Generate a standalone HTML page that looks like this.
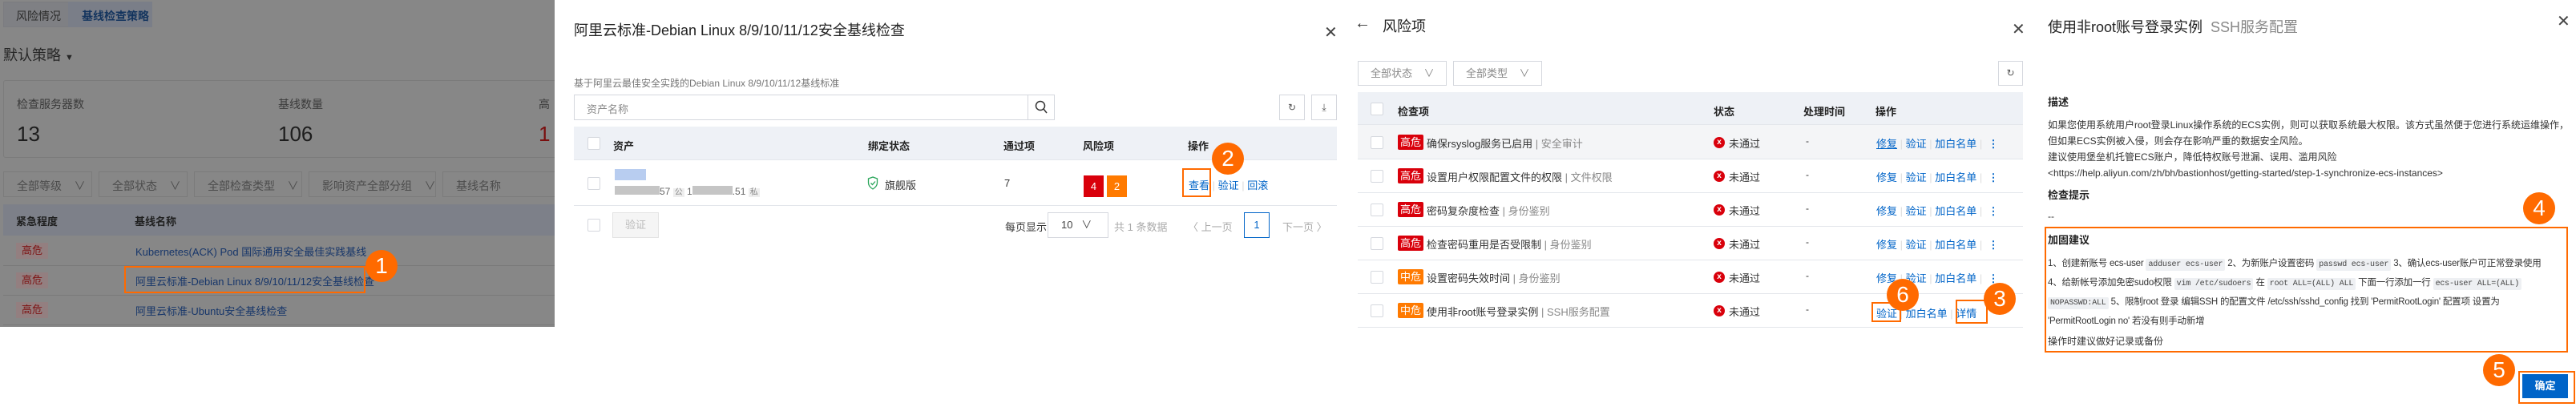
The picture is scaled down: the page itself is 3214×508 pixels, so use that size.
<!DOCTYPE html>
<html><head><meta charset="utf-8"><style>
*{margin:0;padding:0;box-sizing:border-box}
body{width:3214px;height:508px;background:#fff;position:relative;overflow:hidden;font-family:"Liberation Sans","Noto Sans CJK SC",sans-serif;font-size:12px;color:#333}
.a{position:absolute;white-space:nowrap}
.g{background:#878787}
.cb{position:absolute;width:16px;height:16px;border:1px solid #d5d8de;background:#fff;border-radius:2px}
.circ{position:absolute;width:40px;height:40px;border-radius:50%;background:#ff6a00;color:#fff;font-size:28px;line-height:40px;text-align:center;font-family:"Liberation Sans",sans-serif}
.ob{position:absolute;border:2px solid #ff6a00}
.lk{color:#0064c8}
.tagr{position:absolute;background:#d9000b;color:#fff;height:19px;line-height:19px;padding:0 3px;font-size:13px;border-radius:2px}
.tago{position:absolute;background:#ff7a00;color:#fff;height:19px;line-height:19px;padding:0 3px;font-size:13px;border-radius:2px}
.code{background:#eef0f3;font-family:"Liberation Mono",monospace;font-size:10px;padding:2px 3px;color:#444;border-radius:2px}
.x{position:absolute;width:14px;height:14px;border-radius:50%;background:#d9000b;color:#fff;font-size:10px;line-height:14px;text-align:center;font-weight:bold}
.sel{position:absolute;border:1px solid #d5d8de;height:31px;color:#888;line-height:29px;padding-left:15px;font-size:13px}
#left{position:absolute;left:0;top:0;width:692px;height:408px;overflow:hidden;background:#878787}
</style></head><body>

<!-- LEFT dimmed page -->
<div id="left">
<div class="a" style="left:4px;top:2px;width:186px;height:32px;background:#7f8084;border:1px solid #7b7c80"></div>
<div class="a" style="left:85px;top:2px;width:105px;height:32px;background:#7a7e88"></div>
<div class="a" style="left:20px;top:10px;font-size:14px;color:#2b2b2b">风险情况</div>
<div class="a" style="left:102px;top:10px;font-size:14px;color:#13345e;font-weight:bold">基线检查策略</div>
<div class="a" style="left:4px;top:55px;font-size:18px;color:#262626">默认策略 <span style="font-size:11px">▼</span></div>
<div class="a" style="left:4px;top:100px;width:700px;height:97px;border:1px solid #7b7b7b;border-radius:3px"></div>
<div class="a" style="left:21px;top:120px;font-size:14px;color:#3a3a3a">检查服务器数</div>
<div class="a" style="left:21px;top:152px;font-size:26px;color:#1d1d1d">13</div>
<div class="a" style="left:347px;top:120px;font-size:14px;color:#3a3a3a">基线数量</div>
<div class="a" style="left:347px;top:152px;font-size:26px;color:#1d1d1d">106</div>
<div class="a" style="left:672px;top:120px;font-size:14px;color:#3a3a3a">高</div>
<div class="a" style="left:672px;top:152px;font-size:26px;color:#7a0f0f">1</div>
<div class="a" style="left:4px;top:214px;width:111px;height:32px;border:1px solid #7b7b7b"></div>
<div class="a" style="left:123px;top:214px;width:111px;height:32px;border:1px solid #7b7b7b"></div>
<div class="a" style="left:242px;top:214px;width:135px;height:32px;border:1px solid #7b7b7b"></div>
<div class="a" style="left:385px;top:214px;width:159px;height:32px;border:1px solid #7b7b7b"></div>
<div class="a" style="left:552px;top:214px;width:150px;height:32px;border:1px solid #7b7b7b"></div>
<div class="a" style="left:21px;top:222px;font-size:14px;color:#4c4c4c">全部等级 &nbsp;&nbsp; ∨</div>
<div class="a" style="left:140px;top:222px;font-size:14px;color:#4c4c4c">全部状态 &nbsp;&nbsp; ∨</div>
<div class="a" style="left:259px;top:222px;font-size:14px;color:#4c4c4c">全部检查类型 &nbsp;&nbsp; ∨</div>
<div class="a" style="left:402px;top:222px;font-size:14px;color:#4c4c4c">影响资产全部分组 &nbsp;&nbsp; ∨</div>
<div class="a" style="left:569px;top:222px;font-size:14px;color:#4c4c4c">基线名称</div>
<div class="a" style="left:4px;top:255px;width:690px;height:39px;background:#7d8089"></div>
<div class="a" style="left:20px;top:266px;font-size:13px;font-weight:bold;color:#1f1f1f">紧急程度</div>
<div class="a" style="left:168px;top:266px;font-size:13px;font-weight:bold;color:#1f1f1f">基线名称</div>
<div class="a" style="left:4px;top:331px;width:690px;height:1px;background:#7a7a7a"></div>
<div class="a" style="left:4px;top:368px;width:690px;height:1px;background:#7a7a7a"></div>
<div class="a" style="left:4px;top:405px;width:690px;height:1px;background:#7a7a7a"></div>
<div class="a" style="left:20px;top:303px;width:40px;height:20px;background:#937f80;color:#7d1212;font-size:13px;line-height:20px;text-align:center">高危</div>
<div class="a" style="left:20px;top:340px;width:40px;height:20px;background:#937f80;color:#7d1212;font-size:13px;line-height:20px;text-align:center">高危</div>
<div class="a" style="left:20px;top:377px;width:40px;height:20px;background:#937f80;color:#7d1212;font-size:13px;line-height:20px;text-align:center">高危</div>
<div class="a" style="left:169px;top:304px;font-size:13px;color:#17366a">Kubernetes(ACK) Pod 国际通用安全最佳实践基线</div>
<div class="a" style="left:169px;top:341px;font-size:13px;color:#17366a">阿里云标准-Debian Linux 8/9/10/11/12安全基线检查</div>
<div class="a" style="left:169px;top:378px;font-size:13px;color:#17366a">阿里云标准-Ubuntu安全基线检查</div>
<div class="ob" style="left:155px;top:332px;width:301px;height:34px"></div>
<div class="circ" style="left:456px;top:312px">1</div>
</div>

<!-- MODAL 2 -->
<div class="a" style="left:716px;top:24px;font-size:18px;color:#222">阿里云标准-Debian Linux 8/9/10/11/12安全基线检查</div>
<div class="a" style="left:716px;top:95px;font-size:12px;color:#777">基于阿里云最佳安全实践的Debian Linux 8/9/10/11/12基线标准</div>
<div class="a" style="left:716px;top:118px;width:600px;height:32px;border:1px solid #d5d8de"></div>
<div class="a" style="left:1282px;top:118px;width:1px;height:32px;background:#d5d8de"></div>
<div class="a" style="left:732px;top:126px;font-size:13px;color:#888">资产名称</div>
<svg class="a" style="left:1291px;top:125px" width="16" height="18" viewBox="0 0 16 18"><circle cx="7" cy="7" r="5.5" fill="none" stroke="#333" stroke-width="1.5"/><path d="M11 11l4 5" stroke="#333" stroke-width="1.5"/></svg>
<div class="a" style="left:1596px;top:118px;width:32px;height:32px;border:1px solid #d5d8de;text-align:center;line-height:30px;color:#555;font-size:12px">↻</div>
<div class="a" style="left:1636px;top:118px;width:32px;height:32px;border:1px solid #d5d8de;text-align:center;line-height:30px;color:#555;font-size:12px">⤓</div>
<div class="a" style="left:716px;top:158px;width:952px;height:42px;background:#eef1f6;border-bottom:1px solid #e3e6eb"></div>
<div class="cb" style="left:733px;top:171px"></div>
<div class="a" style="left:765px;top:172px;font-weight:bold;font-size:13px;color:#222">资产</div>
<div class="a" style="left:1083px;top:172px;font-weight:bold;font-size:13px;color:#222">绑定状态</div>
<div class="a" style="left:1252px;top:172px;font-weight:bold;font-size:13px;color:#222">通过项</div>
<div class="a" style="left:1351px;top:172px;font-weight:bold;font-size:13px;color:#222">风险项</div>
<div class="a" style="left:1482px;top:172px;font-weight:bold;font-size:13px;color:#222">操作</div>
<div class="cb" style="left:733px;top:221px"></div>
<div class="a" style="left:767px;top:211px;width:39px;height:14px;background:#b8cdf0"></div>
<div class="a" style="left:767px;top:231px;font-size:12px;color:#666"><span style="display:inline-block;width:56px;height:11px;background:#c5c5c5"></span>57 <span style="background:#eee;color:#888;font-size:10px;padding:0 2px">公</span> 1<span style="display:inline-block;width:50px;height:11px;background:#c5c5c5"></span>.51 <span style="background:#eee;color:#888;font-size:10px;padding:0 2px">私</span></div>
<svg class="a" style="left:1082px;top:220px" width="14" height="17" viewBox="0 0 14 17"><path d="M7 1L1.5 3v5c0 4 3 6.5 5.5 8 2.5-1.5 5.5-4 5.5-8V3z" fill="none" stroke="#2aa55a" stroke-width="1.3"/><path d="M4.5 8.5l2 2 3.5-4" fill="none" stroke="#2aa55a" stroke-width="1.3"/></svg>
<div class="a" style="left:1104px;top:221px;font-size:13px;color:#333">旗舰版</div>
<div class="a" style="left:1253px;top:221px;font-size:13px;color:#333">7</div>
<div class="a" style="left:1352px;top:219px;width:25px;height:27px;background:#d9000b;color:#fff;text-align:center;line-height:27px;font-size:13px">4</div>
<div class="a" style="left:1381px;top:219px;width:25px;height:27px;background:#ff7a00;color:#fff;text-align:center;line-height:27px;font-size:13px">2</div>
<div class="a lk" style="left:1483px;top:221px;font-size:13px">查看 <span style="color:#ddd">|</span> 验证 <span style="color:#ddd">|</span> 回滚</div>
<div class="ob" style="left:1475px;top:210px;width:36px;height:36px"></div>
<div class="circ" style="left:1512px;top:178px">2</div>
<div class="a" style="left:716px;top:256px;width:952px;height:1px;background:#e3e6eb"></div>
<div class="cb" style="left:733px;top:273px"></div>
<div class="a" style="left:764px;top:265px;width:58px;height:32px;border:1px solid #e3e3e3;background:#f5f5f5;color:#bbb;text-align:center;line-height:30px;font-size:13px">验证</div>
<div class="a" style="left:1254px;top:273px;font-size:13px;color:#333">每页显示</div>
<div class="a" style="left:1307px;top:265px;width:76px;height:32px;border:1px solid #d5d8de;font-size:13px;line-height:30px;padding-left:16px;color:#444">10 &nbsp;&nbsp;∨</div>
<div class="a" style="left:1390px;top:273px;font-size:13px;color:#aaa">共 1 条数据</div>
<div class="a" style="left:1482px;top:273px;font-size:13px;color:#aaa">〈 上一页</div>
<div class="a" style="left:1552px;top:265px;width:32px;height:32px;border:1px solid #0064c8;color:#0064c8;text-align:center;line-height:30px;font-size:13px">1</div>
<div class="a" style="left:1600px;top:273px;font-size:13px;color:#aaa">下一页 〉</div>
<div class="a" style="left:1652px;top:28px;font-size:20px;color:#444">✕</div>

<!-- PANEL 3 -->
<div class="a" style="left:1690px;top:18px;font-size:20px;color:#333">←</div>
<div class="a" style="left:1725px;top:19px;font-size:18px;color:#222">风险项</div>
<div class="sel" style="left:1694px;top:76px;width:111px">全部状态 &nbsp;&nbsp; ∨</div>
<div class="sel" style="left:1813px;top:76px;width:111px">全部类型 &nbsp;&nbsp; ∨</div>
<div class="a" style="left:2493px;top:76px;width:31px;height:31px;border:1px solid #d5d8de;text-align:center;line-height:29px;color:#555">↻</div>
<div class="a" style="left:1694px;top:115px;width:830px;height:41px;background:#eef1f6;border-bottom:1px solid #e3e6eb"></div>
<div class="cb" style="left:1710px;top:128px"></div>
<div class="a" style="left:1744px;top:129px;font-weight:bold;font-size:13px;color:#222">检查项</div>
<div class="a" style="left:2138px;top:129px;font-weight:bold;font-size:13px;color:#222">状态</div>
<div class="a" style="left:2250px;top:129px;font-weight:bold;font-size:13px;color:#222">处理时间</div>
<div class="a" style="left:2340px;top:129px;font-weight:bold;font-size:13px;color:#222">操作</div>
<div class="a" style="left:1694px;top:156px;width:830px;height:42px;background:#f4f5f7"></div>

<div class="a" style="left:1694px;top:198px;width:830px;height:1px;background:#e3e6eb"></div>
<div class="a" style="left:1694px;top:240px;width:830px;height:1px;background:#e3e6eb"></div>
<div class="a" style="left:1694px;top:282px;width:830px;height:1px;background:#e3e6eb"></div>
<div class="a" style="left:1694px;top:324px;width:830px;height:1px;background:#e3e6eb"></div>
<div class="a" style="left:1694px;top:366px;width:830px;height:1px;background:#e3e6eb"></div>
<div class="a" style="left:1694px;top:408px;width:830px;height:1px;background:#e3e6eb"></div>

<div class="cb" style="left:1710px;top:170px"></div><div class="tagr" style="left:1744px;top:168px">高危</div>
<div class="a" style="left:1780px;top:169px;font-size:13px;color:#333">确保rsyslog服务已启用 <span style="color:#888">| 安全审计</span></div>
<div class="cb" style="left:1710px;top:212px"></div><div class="tagr" style="left:1744px;top:210px">高危</div>
<div class="a" style="left:1780px;top:211px;font-size:13px;color:#333">设置用户权限配置文件的权限 <span style="color:#888">| 文件权限</span></div>
<div class="cb" style="left:1710px;top:254px"></div><div class="tagr" style="left:1744px;top:252px">高危</div>
<div class="a" style="left:1780px;top:253px;font-size:13px;color:#333">密码复杂度检查 <span style="color:#888">| 身份鉴别</span></div>
<div class="cb" style="left:1710px;top:296px"></div><div class="tagr" style="left:1744px;top:294px">高危</div>
<div class="a" style="left:1780px;top:295px;font-size:13px;color:#333">检查密码重用是否受限制 <span style="color:#888">| 身份鉴别</span></div>
<div class="cb" style="left:1710px;top:338px"></div><div class="tago" style="left:1744px;top:336px">中危</div>
<div class="a" style="left:1780px;top:337px;font-size:13px;color:#333">设置密码失效时间 <span style="color:#888">| 身份鉴别</span></div>
<div class="cb" style="left:1710px;top:380px"></div><div class="tago" style="left:1744px;top:378px">中危</div>
<div class="a" style="left:1780px;top:379px;font-size:13px;color:#333">使用非root账号登录实例 <span style="color:#888">| SSH服务配置</span></div>

<div class="x" style="left:2138px;top:171px">x</div><div class="a" style="left:2157px;top:169px;font-size:13px">未通过</div><div class="a" style="left:2253px;top:169px">-</div>
<div class="x" style="left:2138px;top:213px">x</div><div class="a" style="left:2157px;top:211px;font-size:13px">未通过</div><div class="a" style="left:2253px;top:211px">-</div>
<div class="x" style="left:2138px;top:255px">x</div><div class="a" style="left:2157px;top:253px;font-size:13px">未通过</div><div class="a" style="left:2253px;top:253px">-</div>
<div class="x" style="left:2138px;top:297px">x</div><div class="a" style="left:2157px;top:295px;font-size:13px">未通过</div><div class="a" style="left:2253px;top:295px">-</div>
<div class="x" style="left:2138px;top:339px">x</div><div class="a" style="left:2157px;top:337px;font-size:13px">未通过</div><div class="a" style="left:2253px;top:337px">-</div>
<div class="x" style="left:2138px;top:381px">x</div><div class="a" style="left:2157px;top:379px;font-size:13px">未通过</div><div class="a" style="left:2253px;top:379px">-</div>

<div class="a lk" style="left:2341px;top:169px;font-size:13px"><u>修复</u> <span style="color:#ddd">|</span> 验证 <span style="color:#ddd">|</span> 加白名单 <span style="color:#ddd">|</span> &nbsp;<b>⋮</b></div>
<div class="a lk" style="left:2341px;top:211px;font-size:13px">修复 <span style="color:#ddd">|</span> 验证 <span style="color:#ddd">|</span> 加白名单 <span style="color:#ddd">|</span> &nbsp;<b>⋮</b></div>
<div class="a lk" style="left:2341px;top:253px;font-size:13px">修复 <span style="color:#ddd">|</span> 验证 <span style="color:#ddd">|</span> 加白名单 <span style="color:#ddd">|</span> &nbsp;<b>⋮</b></div>
<div class="a lk" style="left:2341px;top:295px;font-size:13px">修复 <span style="color:#ddd">|</span> 验证 <span style="color:#ddd">|</span> 加白名单 <span style="color:#ddd">|</span> &nbsp;<b>⋮</b></div>
<div class="a lk" style="left:2341px;top:337px;font-size:13px">修复 <span style="color:#ddd">|</span> 验证 <span style="color:#ddd">|</span> 加白名单 <span style="color:#ddd">|</span> &nbsp;<b>⋮</b></div>
<div class="a lk" style="left:2341px;top:381px;font-size:13px">验证 <span style="color:#ddd">|</span> 加白名单 <span style="color:#ddd">|</span> 详情</div>
<div class="ob" style="left:2335px;top:377px;width:37px;height:25px"></div>
<div class="ob" style="left:2440px;top:374px;width:40px;height:30px"></div>
<div class="circ" style="left:2354px;top:348px">6</div>
<div class="circ" style="left:2475px;top:353px">3</div>
<div class="a" style="left:2510px;top:24px;font-size:20px;color:#444">✕</div>

<!-- PANEL 4 -->
<div class="a" style="left:2555px;top:20px;font-size:18px;color:#222">使用非root账号登录实例 &nbsp;<span style="color:#888">SSH服务配置</span></div>
<div class="a" style="left:3190px;top:14px;font-size:20px;color:#444">✕</div>
<div class="a" style="left:2555px;top:117px;font-size:13px;font-weight:bold;color:#222">描述</div>
<div class="a" style="left:2555px;top:146px;font-size:12px;line-height:20px;color:#333">如果您使用系统用户root登录Linux操作系统的ECS实例，则可以获取系统最大权限。该方式虽然便于您进行系统运维操作，<br>但如果ECS实例被入侵，则会存在影响严重的数据安全风险。<br>建议使用堡垒机托管ECS账户，降低特权账号泄漏、误用、滥用风险<br>&lt;https://help.aliyun.com/zh/bh/bastionhost/getting-started/step-1-synchronize-ecs-instances&gt;</div>
<div class="a" style="left:2555px;top:233px;font-size:13px;font-weight:bold;color:#222">检查提示</div>
<div class="a" style="left:2555px;top:263px;font-size:12px;color:#333">--</div>
<div class="ob" style="left:2551px;top:283px;width:653px;height:157px"></div>
<div class="a" style="left:2555px;top:289px;font-size:13px;font-weight:bold;color:#222">加固建议</div>
<div class="a" style="left:2555px;top:318px;font-size:11.5px;line-height:22px;color:#333;letter-spacing:-0.2px">1、创建新账号 ecs-user <span class="code">adduser ecs-user</span> 2、为新账户设置密码 <span class="code">passwd ecs-user</span> 3、确认ecs-user账户可正常登录使用<br>4、给新帐号添加免密sudo权限 <span class="code">vim /etc/sudoers</span> 在 <span class="code">root ALL=(ALL)  ALL</span> 下面一行添加一行 <span class="code">ecs-user ALL=(ALL)</span><br><span class="code">NOPASSWD:ALL</span> 5、限制root 登录 编辑SSH 的配置文件 /etc/ssh/sshd_config 找到 'PermitRootLogin' 配置项 设置为<br>'PermitRootLogin no' 若没有则手动新增</div>
<div class="a" style="left:2555px;top:417px;font-size:12px;color:#333">操作时建议做好记录或备份</div>
<div class="circ" style="left:3148px;top:240px">4</div>
<div class="a" style="left:3147px;top:467px;width:57px;height:30px;background:#0064c8;color:#fff;text-align:center;line-height:30px;font-size:13px;font-weight:bold">确定</div>
<div class="ob" style="left:3142px;top:463px;width:71px;height:41px"></div>
<div class="circ" style="left:3098px;top:442px">5</div>
</body></html>
